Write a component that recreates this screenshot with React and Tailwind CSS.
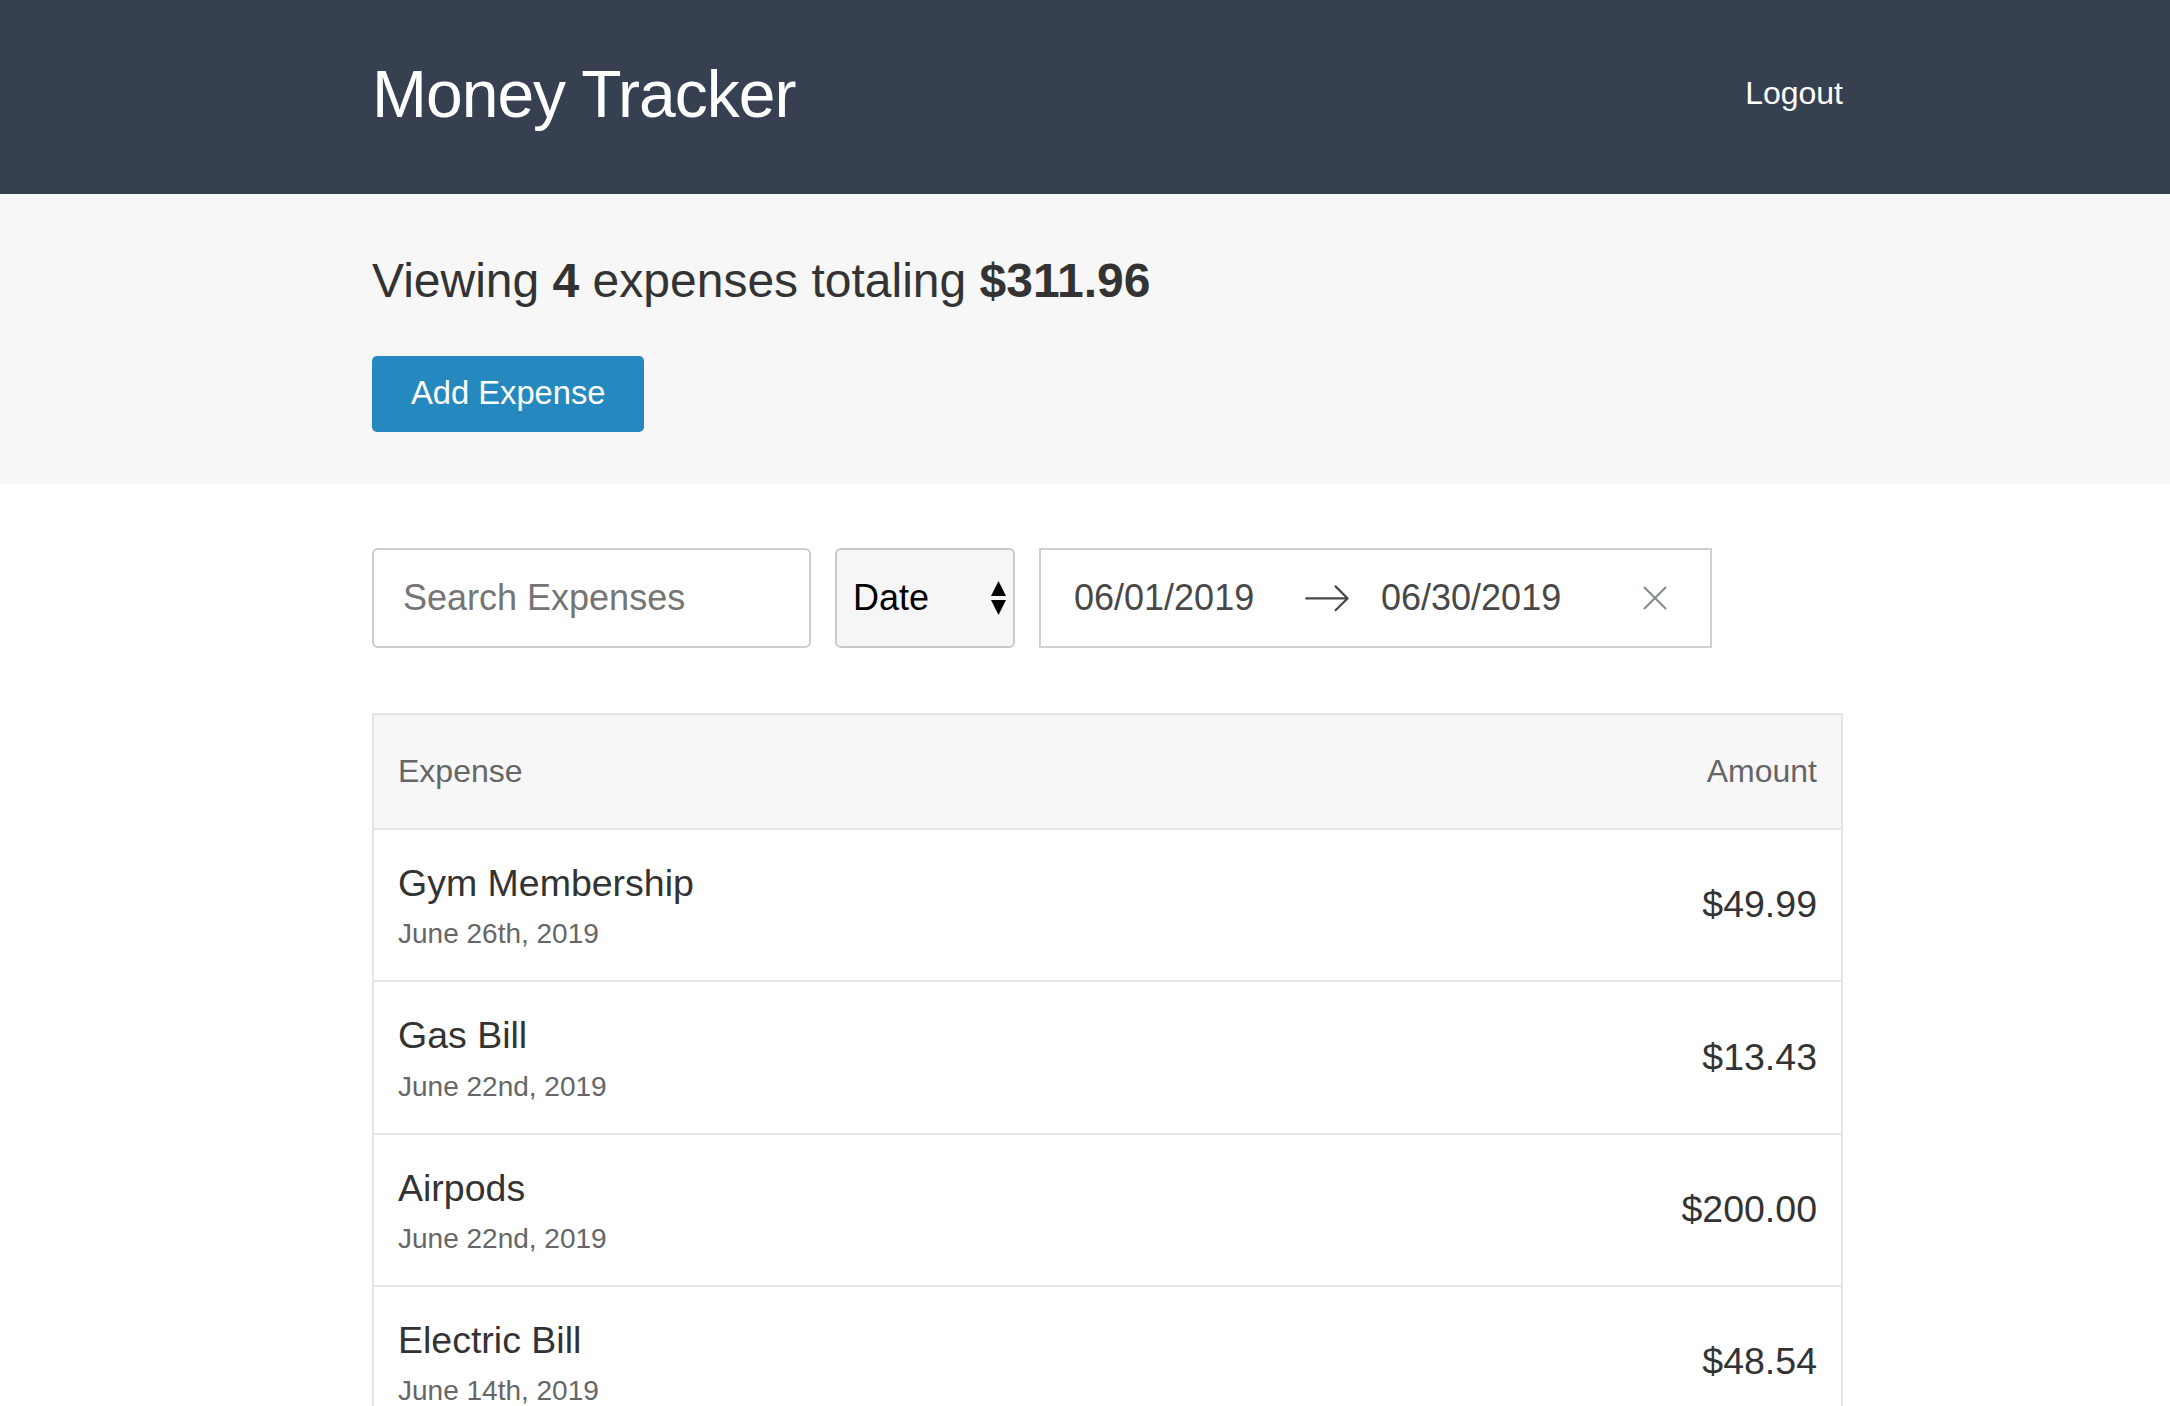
import React from "react";

const expenses = [
  { id: 1, description: "Gym Membership", date: "June 26th, 2019", amount: "$49.99" },
  { id: 2, description: "Gas Bill", date: "June 22nd, 2019", amount: "$13.43" },
  { id: 3, description: "Airpods", date: "June 22nd, 2019", amount: "$200.00" },
  { id: 4, description: "Electric Bill", date: "June 14th, 2019", amount: "$48.54" },
];

const ArrowIcon = () => (
  <svg viewBox="0 0 1000 1000" className="w-[48px] h-[48px] fill-[#484848]">
    <path d="M694 242l249 250c12 11 12 21 1 32L694 773c-5 5-10 7-16 7s-11-2-16-7c-11-11-11-21 0-32l210-210H68c-13 0-23-10-23-23s10-23 23-23h806L662 275c-21-22 11-54 32-33z" />
  </svg>
);

const CloseIcon = () => (
  <svg viewBox="0 0 24 24" className="w-[24px] h-[24px]" stroke="#82888a" strokeWidth="2" fill="none">
    <line x1="1" y1="1" x2="23" y2="23" />
    <line x1="23" y1="1" x2="1" y2="23" />
  </svg>
);

const SelectArrows = () => (
  <svg viewBox="0 0 17 36" className="w-[17px] h-[36px] fill-black">
    <polygon points="1,16 8.5,1 16,16" />
    <polygon points="1,20 16,20 8.5,35" />
  </svg>
);

const ExpenseRow = ({ expense }) => (
  <div className="flex items-center justify-between px-[24px] py-[24px] border-b-2 border-[#e5e5e5]">
    <div>
      <h3 className="text-[37.5px] leading-[59.5px] text-[#333]">{expense.description}</h3>
      <span className="block text-[28px] leading-[42.8px] text-[#666]">{expense.date}</span>
    </div>
    <h3 className="text-[37.5px] leading-[57.5px] text-[#333]">{expense.amount}</h3>
  </div>
);

export default function App() {
  return (
    <div className="min-h-screen bg-white font-['Liberation_Sans',Arial,sans-serif] text-[#333]">
      <header className="bg-[#364051]">
        <div className="ml-[372px] w-[1471px] h-[194px] flex items-center justify-between">
          <h1 className="text-[66px] leading-none tracking-[-1px] text-white mb-[6px]">Money Tracker</h1>
          <button className="text-[32px] leading-none text-white mb-2">Logout</button>
        </div>
      </header>

      <div className="bg-[#f7f7f7]">
        <div className="ml-[372px] w-[1471px] pt-[49px] pb-[52px]">
          <h1 className="text-[48px] leading-[1.6] font-light text-[#333]">
            Viewing <span className="font-bold">4</span> expenses totaling{" "}
            <span className="font-bold">$311.96</span>
          </h1>
          <button className="mt-[36px] h-[76px] px-[39px] flex items-center rounded-[5px] bg-[#2588bf] text-white text-[32.7px] leading-none font-light">
            Add Expense
          </button>
        </div>
      </div>

      <div className="ml-[372px] w-[1471px] pb-[64px]">
        <div className="mt-[64px] flex items-center gap-[24px]">
          <input
            type="text"
            placeholder="Search Expenses"
            className="w-[439px] h-[100px] border-2 border-[#cacccd] rounded-[6px] pl-[29px] text-[36px] text-[#333] placeholder:text-[#757575] outline-none"
          />
          <div className="w-[180px] h-[100px] border-2 border-[#c9c9c9] rounded-[6px] bg-[#f6f6f6] pl-[16px] pr-[6px] flex items-center justify-between">
            <span className="text-[36px] text-black">Date</span>
            <SelectArrows />
          </div>
          <div className="w-[673px] h-[100px] border-2 border-[#d0d0d0] flex items-center">
            <span className="ml-[33px] w-[229px] text-[36px] text-[#484848]">06/01/2019</span>
            <ArrowIcon />
            <span className="ml-[30px] w-[262px] text-[36px] text-[#484848]">06/30/2019</span>
            <CloseIcon />
          </div>
        </div>

        <div className="mt-[65px] border-x-2 border-t-2 border-[#e5e5e5]">
          <div className="flex justify-between px-[24px] py-[31px] bg-[#f7f7f7] border-b-2 border-[#e5e5e5] text-[32px] leading-[1.6] text-[#666]">
            <span>Expense</span>
            <span>Amount</span>
          </div>
          {expenses.map((expense) => (
            <ExpenseRow key={expense.id} expense={expense} />
          ))}
        </div>
      </div>
    </div>
  );
}
